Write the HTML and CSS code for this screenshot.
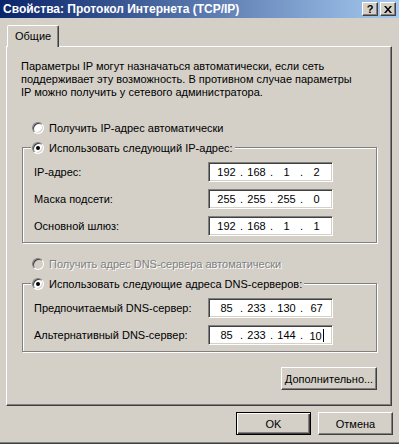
FILE: index.html
```html
<!DOCTYPE html>
<html lang="ru">
<head>
    <meta charset="UTF-8">
    <title>Свойства: Протокол Интернета (TCP/IP)</title>
    <link rel="stylesheet" href="styles.css">
</head>
<body>
<div class="window">
    <div class="titlebar">
        <span class="title">Свойства: Протокол Интернета (TCP/IP)</span>
        <div class="caption-buttons">
            <span class="cap-btn cap-help">?</span>
            <span class="cap-btn">
                <svg width="8" height="7" viewBox="0 0 8 7"><path d="M0 0h2l2 2.4L6 0h2L5 3.5 8 7H6L4 4.6 2 7H0l3-3.5z" fill="#000"/></svg>
            </span>
        </div>
    </div>

    <div class="content">
        <div class="tabs">
            <div class="tab">Общие</div>
        </div>

        <div class="panel">
            <p class="intro">Параметры IP могут назначаться автоматически, если сеть<br>поддерживает эту возможность. В противном случае параметры<br>IP можно получить у сетевого администратора.</p>

            <div class="radio"><span class="radio-box"></span>Получить IP-адрес автоматически</div>

            <fieldset class="group">
                <legend><span class="legend-inner"><span class="radio-box checked"></span>Использовать следующий IP-адрес:</span></legend>
                <div class="field-row">
                    <span>IP-адрес:</span>
                    <div class="ip-input"><span class="octet">192</span><span class="dot">.</span><span class="octet">168</span><span class="dot">.</span><span class="octet">1</span><span class="dot">.</span><span class="octet">2</span></div>
                </div>
                <div class="field-row">
                    <span>Маска подсети:</span>
                    <div class="ip-input"><span class="octet">255</span><span class="dot">.</span><span class="octet">255</span><span class="dot">.</span><span class="octet">255</span><span class="dot">.</span><span class="octet">0</span></div>
                </div>
                <div class="field-row">
                    <span>Основной шлюз:</span>
                    <div class="ip-input"><span class="octet">192</span><span class="dot">.</span><span class="octet">168</span><span class="dot">.</span><span class="octet">1</span><span class="dot">.</span><span class="octet">1</span></div>
                </div>
            </fieldset>

            <div class="radio disabled"><span class="radio-box"></span>Получить адрес DNS-сервера автоматически</div>

            <fieldset class="group">
                <legend><span class="legend-inner"><span class="radio-box checked"></span>Использовать следующие адреса DNS-серверов:</span></legend>
                <div class="field-row">
                    <span>Предпочитаемый DNS-сервер:</span>
                    <div class="ip-input"><span class="octet">85</span><span class="dot">.</span><span class="octet">233</span><span class="dot">.</span><span class="octet">130</span><span class="dot">.</span><span class="octet">67</span></div>
                </div>
                <div class="field-row">
                    <span>Альтернативный DNS-сервер:</span>
                    <div class="ip-input"><span class="octet">85</span><span class="dot">.</span><span class="octet">233</span><span class="dot">.</span><span class="octet">144</span><span class="dot">.</span><span class="octet">10<span class="caret"></span></span></div>
                </div>
            </fieldset>

            <div class="panel-actions">
                <button class="btn btn-wide">Дополнительно...</button>
            </div>
        </div>

        <div class="dialog-actions">
            <button class="btn btn-default">OK</button>
            <button class="btn">Отмена</button>
        </div>
    </div>
</div>
</body>
</html>
```

FILE: styles.css
```css
* {
    box-sizing: border-box;
}
body {
    margin: 0;
    background: #d4d0c8;
    font-family: "Liberation Sans", Arial, sans-serif;
    font-size: 11px;
    color: #000;
}
.window {
    width: 399px;
    height: 444px;
    display: flex;
    flex-direction: column;
    background: #d4d0c8;
    border-bottom: 1px solid #404040;
    box-shadow: inset 0 -1px 0 #808080;
}

/* title bar */
.titlebar {
    height: 18px;
    flex: none;
    display: flex;
    align-items: center;
    justify-content: space-between;
    padding: 0 3px;
    background: linear-gradient(to right, #0a246a, #a6caf0);
    color: #fff;
    font-weight: bold;
}
.title {
    font-size: 12px;
    line-height: 18px;
    white-space: nowrap;
}
.caption-buttons {
    display: flex;
    gap: 2px;
}
.cap-btn {
    width: 16px;
    height: 14px;
    display: flex;
    align-items: center;
    justify-content: center;
    background: #d4d0c8;
    border: 1px solid;
    border-color: #fff #404040 #404040 #fff;
    box-shadow: inset -1px -1px #808080;
    color: #000;
    font-size: 11px;
    line-height: 1;
}

/* tabs and panel */
.content {
    flex: 1;
    display: flex;
    flex-direction: column;
    padding: 7px 7px 0 6px;
}
.tabs {
    display: flex;
    height: 21px;
    padding-left: 1px;
    position: relative;
    z-index: 1;
}
.tab {
    height: 22px;
    padding: 0 7px;
    line-height: 21px;
    background: #d4d0c8;
    border: 1px solid;
    border-bottom: none;
    border-color: #fff #404040 transparent #fff;
    border-radius: 2px 2px 0 0;
    box-shadow: inset -1px 0 #808080;
}
.panel {
    height: 360px;
    flex: none;
    padding: 13px 13px 0 14px;
    border: 1px solid;
    border-color: #fff #404040 #404040 #fff;
    box-shadow: inset -1px -1px #808080;
}
.intro {
    margin: 0;
    line-height: 13px;
    white-space: nowrap;
}

/* radios */
.radio {
    display: flex;
    align-items: center;
    gap: 5px;
    height: 13px;
    margin-left: 11px;
    white-space: nowrap;
}
.panel > .radio:first-of-type {
    margin-top: 22px;
}
.radio.disabled {
    margin-top: 14px;
    color: #808080;
    text-shadow: 1px 1px 0 #fff;
}
.radio-box {
    width: 12px;
    height: 12px;
    flex: none;
    display: flex;
    align-items: center;
    justify-content: center;
    border-radius: 50%;
    background: #fff;
    border: 1px solid;
    border-color: #808080 #fff #fff #808080;
    box-shadow: inset 1px 1px #404040, inset -1px -1px #d4d0c8;
}
.radio.disabled .radio-box {
    background: #d4d0c8;
}
.radio-box.checked::after {
    content: "";
    width: 4px;
    height: 4px;
    border-radius: 50%;
    background: #000;
}

/* group boxes */
.group {
    margin: 7px 1px 0 1px;
    padding: 8px 0 6px 11px;
    min-width: 0;
    border: 1px solid #808080;
    box-shadow: inset 1px 1px #fff, 1px 1px #fff;
}
.group legend {
    margin-left: -3px;
    padding: 0 2px 0 1px;
    background: #d4d0c8;
}
.legend-inner {
    display: flex;
    align-items: center;
    gap: 5px;
    height: 13px;
    white-space: nowrap;
}
.field-row {
    display: grid;
    grid-template-columns: 174px 125px;
    align-items: center;
    height: 20px;
    white-space: nowrap;
}
.field-row + .field-row {
    margin-top: 7px;
}
.ip-input {
    height: 20px;
    display: flex;
    align-items: center;
    padding-left: 5px;
    background: #fff;
    border: 1px solid;
    border-color: #808080 #fff #fff #808080;
    box-shadow: inset 1px 1px #404040, inset -1px -1px #d4d0c8;
}
.octet {
    width: 25px;
    text-align: center;
}
.dot {
    width: 5px;
    text-align: center;
}
.caret {
    display: inline-block;
    width: 1px;
    height: 13px;
    margin-left: 1px;
    vertical-align: -2px;
    background: #000;
}

/* buttons */
.panel-actions {
    display: flex;
    justify-content: flex-end;
    margin: 15px 1px 0 0;
}
.dialog-actions {
    display: flex;
    justify-content: flex-end;
    gap: 7px;
    margin: 6px -1px 0 0;
}
.btn {
    width: 75px;
    height: 23px;
    padding: 0;
    font: inherit;
    color: #000;
    background: #d4d0c8;
    border: 1px solid;
    border-color: #fff #404040 #404040 #fff;
    box-shadow: inset -1px -1px #808080;
}
.btn-wide {
    width: 96px;
}
.btn-default {
    border-color: #000;
    box-shadow: inset 1px 1px #fff, inset -1px -1px #404040, inset -2px -2px #808080;
}
```
